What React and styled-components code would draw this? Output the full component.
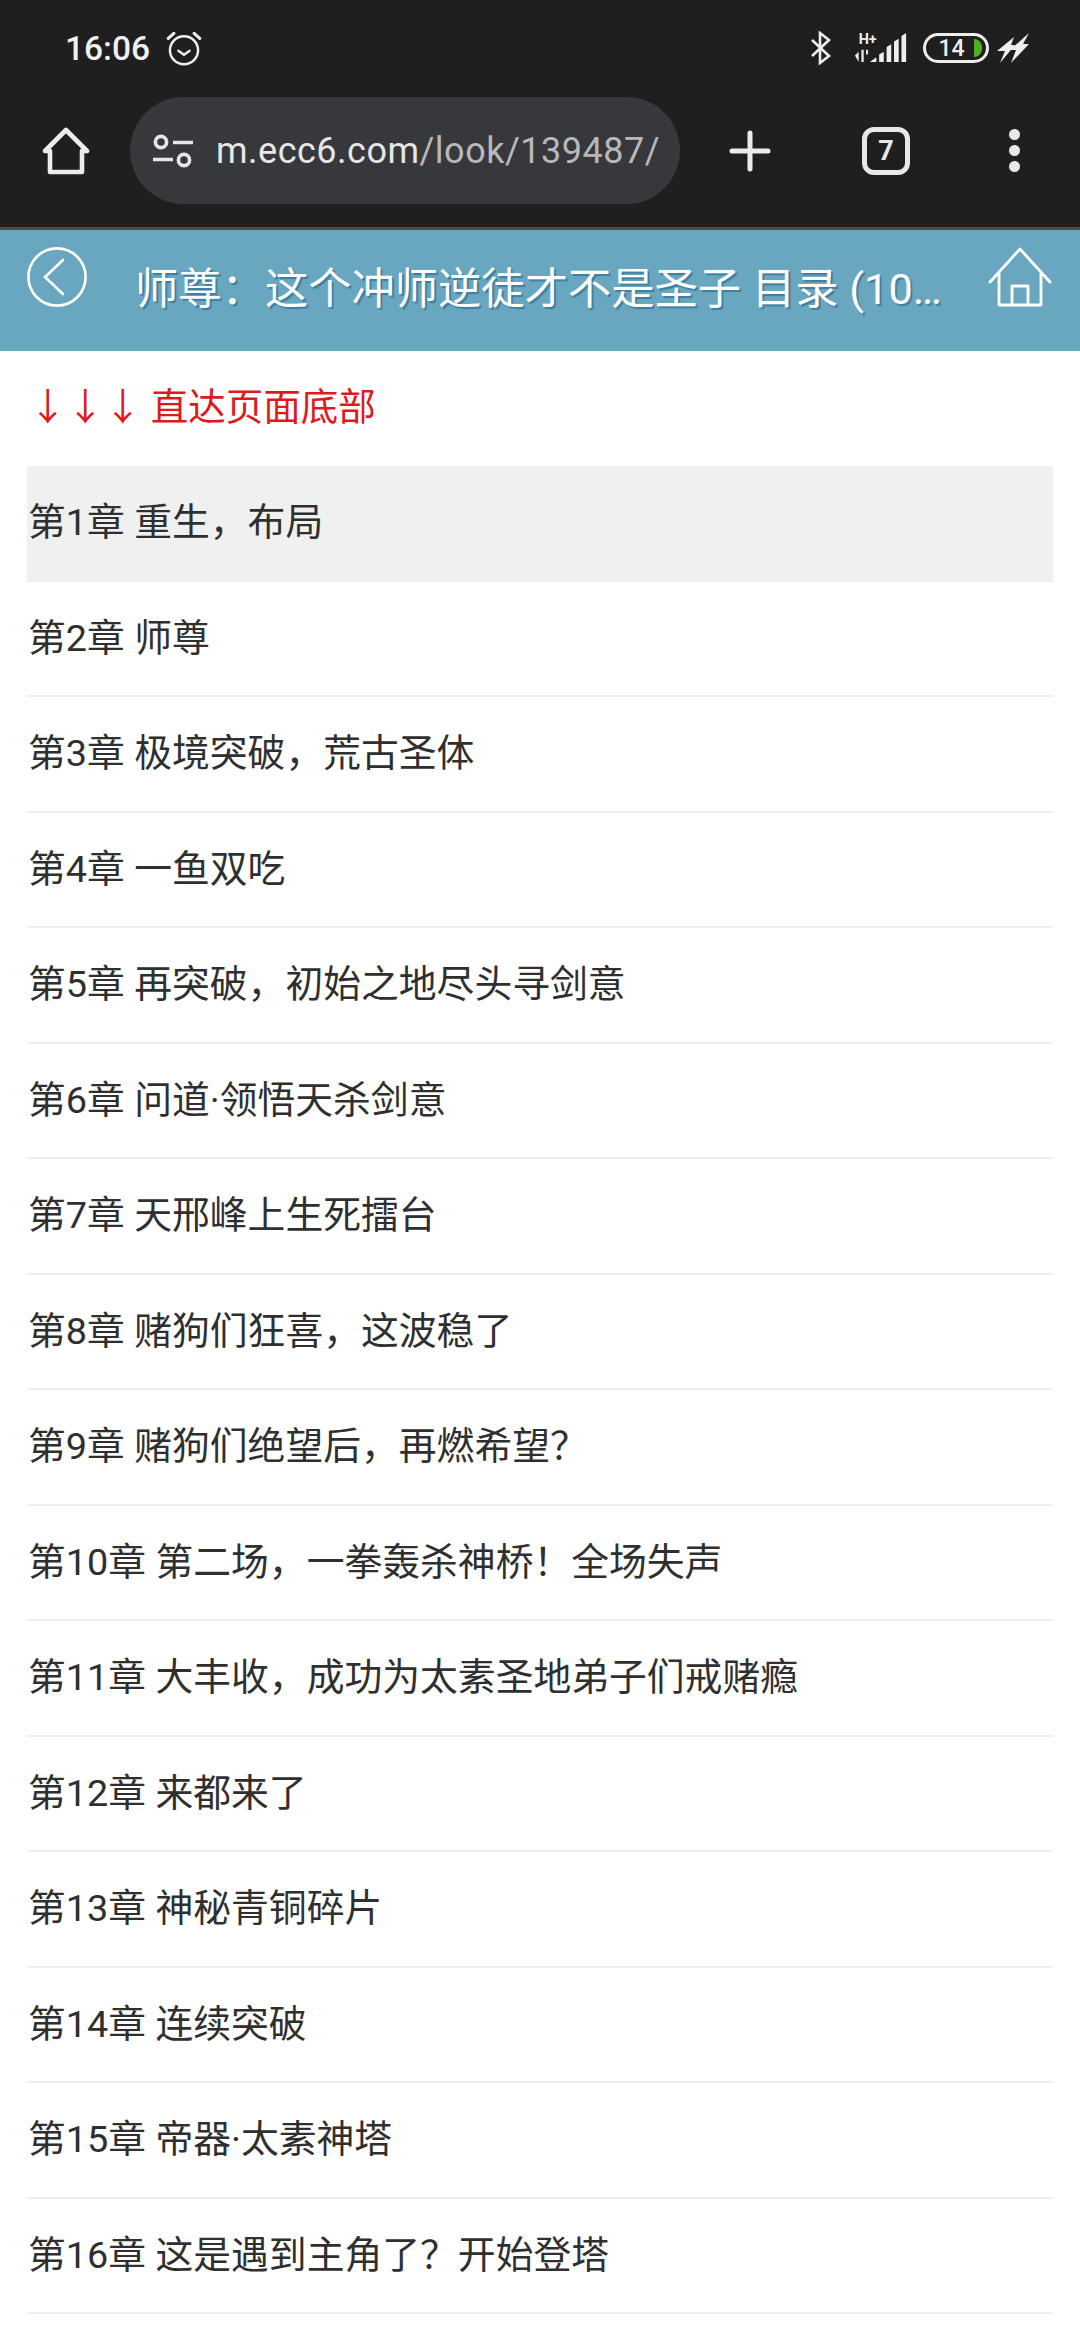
import styled, { createGlobalStyle } from 'styled-components';

const GlobalStyle = createGlobalStyle`
  * {
    box-sizing: border-box;
  }
  html,
  body {
    margin: 0;
    padding: 0;
    height: 2340px;
    overflow: hidden;
    background-color: #fff;
    font-family: Roboto, "Noto Sans CJK SC", sans-serif;
  }
`;

const CHAPTERS = [
  '第1章 重生，布局',
  '第2章 师尊',
  '第3章 极境突破，荒古圣体',
  '第4章 一鱼双吃',
  '第5章 再突破，初始之地尽头寻剑意',
  '第6章 问道·领悟天杀剑意',
  '第7章 天邢峰上生死擂台',
  '第8章 赌狗们狂喜，这波稳了',
  '第9章 赌狗们绝望后，再燃希望？',
  '第10章 第二场，一拳轰杀神桥！全场失声',
  '第11章 大丰收，成功为太素圣地弟子们戒赌瘾',
  '第12章 来都来了',
  '第13章 神秘青铜碎片',
  '第14章 连续突破',
  '第15章 帝器·太素神塔',
  '第16章 这是遇到主角了？开始登塔',
];

const Chrome = styled.div`
  background-color: #1f1f20;
  border-bottom: 3px solid #4b4c4b;
`;

const StatusBar = styled.div`
  display: flex;
  justify-content: space-between;
  align-items: center;
  height: 76px;
  padding: 20px 51px 0 65px;
`;

const StatusGroup = styled.div`
  display: flex;
  align-items: center;
  gap: ${(props) => props.$gap}px;
`;

const Clock = styled.span`
  color: #f0f0f0;
  font-size: 33.5px;
  font-weight: 500;
`;

const Battery = styled.div`
  position: relative;
  display: flex;
  align-items: center;
  justify-content: center;
  width: 66px;
  height: 30px;
  margin-left: 7px;
  padding-right: 9px;
  border: 3px solid #eee;
  border-radius: 15px;
  color: #eee;
  font-size: 23px;
  font-weight: 500;

  &::after {
    content: '';
    position: absolute;
    right: 4px;
    top: 3px;
    width: 8px;
    height: 18px;
    background-color: #4caf1e;
    border-radius: 0 9px 9px 0;
  }
`;

const SignalSvg = styled.svg`
  margin-left: 14px;
`;

const Toolbar = styled.div`
  display: flex;
  align-items: center;
  height: 151px;
  padding: 0 0 2px 42px;
`;

const AddressBar = styled.div`
  display: flex;
  align-items: center;
  gap: 22px;
  width: 550px;
  height: 107px;
  margin-left: 40px;
  padding-left: 22px;
  overflow: hidden;
  background-color: #36383c;
  border-radius: 54px;
  white-space: nowrap;
  font-size: 36px;
  letter-spacing: 0.5px;
`;

const Host = styled.span`
  color: #e6e6e6;
`;

const UrlPath = styled.span`
  color: #b9b9b9;
`;

const TabCount = styled.div`
  display: flex;
  align-items: center;
  justify-content: center;
  width: 48px;
  height: 48px;
  margin-left: 91px;
  border: 5px solid #e8e8e8;
  border-radius: 12px;
  color: #e8e8e8;
  font-size: 27px;
  font-weight: 700;
`;

const PlusIcon = styled.svg`
  margin-left: 49px;
`;

const MenuDots = styled.div`
  display: flex;
  flex-direction: column;
  gap: 5px;
  margin-left: 99px;
`;

const Dot = styled.span`
  width: 11px;
  height: 11px;
  border-radius: 50%;
  background-color: #e8e8e8;
`;

const Header = styled.div`
  display: flex;
  height: 121px;
  padding: 17px 28px 0 27px;
  background-color: #69a7c1;
`;

const Title = styled.h1`
  flex: 1;
  min-width: 0;
  margin: 19px 40px 0 48px;
  overflow: hidden;
  color: #fff;
  font-size: 43.3px;
  font-weight: 400;
  line-height: 48px;
  white-space: nowrap;
  text-overflow: ellipsis;
  text-shadow: 2px 2px 1px #3d7f9f;
`;

const BottomLink = styled.div`
  height: 115px;
  padding: 0 29px;
  color: #dd1a1e;
  font-size: 37.5px;
  line-height: 112px;
`;

const List = styled.ul`
  margin: 0 27px;
  padding: 0;
  list-style: none;
`;

const Row = styled.li`
  height: 115.5px;
  padding-left: 1px;
  color: #2f2f2f;
  font-size: 37.8px;
  line-height: 112px;
  white-space: nowrap;
  background-color: ${(props) => (props.$active ? '#f0f0f0' : 'transparent')};
  border-bottom: 2px solid #eeeeee;
`;

const AlarmIcon = () => (
  <svg width="36" height="36" viewBox="0 0 32 32" fill="none" stroke="#eee" strokeWidth="2.2" strokeLinecap="round">
    <circle cx="16" cy="18" r="12.5" />
    <path d="M11 18.5l5 3.5 5-3.5" />
    <path d="M2 7.5 7 3M30 7.5 25 3" strokeWidth="2.8" />
  </svg>
);

const BluetoothIcon = () => (
  <svg width="22" height="34" viewBox="0 0 22 34" fill="none" stroke="#eee" strokeWidth="2.6">
    <path d="M2 9l17 16-9 7V2l9 7L2 25" />
  </svg>
);

const SignalIcon = () => (
  <SignalSvg width="54" height="34" viewBox="0 0 58 34" fill="#eee">
    <text x="5" y="13" fontFamily="Roboto" fontSize="15.5" fontWeight="700">H+</text>
    <path d="M1 25l4-4v11zM8 19h2.4v13H8zM13 19h2v5h-2z" />
    <path d="M17 32l7-5v5zM27 24l5-3v11h-5zM35 16l5-3v19h-5zM43 10l5-3v25h-5zM51 4l5-3v31h-5z" />
  </SignalSvg>
);

const ChargeIcon = () => (
  <svg width="32" height="32" viewBox="0 0 32 32" fill="#eee">
    <path d="M0 19 17 5l-3 8h4L3 31l5-12zM13 18 32 1l-6 11h6L14 31l5-13z" />
  </svg>
);

const HomeIcon = () => (
  <svg width="48" height="48" viewBox="0 0 48 48" fill="none" stroke="#ececec" strokeWidth="4.6" strokeLinejoin="round" strokeLinecap="round">
    <path d="M3 24 24 3l21 21h-5v21H8V24z" />
  </svg>
);

const SiteIcon = () => (
  <svg width="42" height="36" viewBox="0 0 42 36" fill="none" stroke="#e6e6e6" strokeWidth="3.6">
    <circle cx="9" cy="9" r="5.6" />
    <circle cx="32" cy="27" r="5.6" />
    <path d="M21 9.5h20M1 26.5h20" />
  </svg>
);

const BackIcon = () => (
  <svg width="60" height="60" viewBox="0 0 60 60" fill="none" stroke="#fff" strokeWidth="2.6">
    <circle cx="30" cy="30" r="28.6" />
    <path d="M36 13 18 30l18 17" strokeLinecap="round" />
  </svg>
);

const SiteHomeIcon = () => (
  <svg width="64" height="60" viewBox="0 0 64 60" fill="none" stroke="#fff" strokeWidth="2.8" strokeLinecap="round" strokeLinejoin="round">
    <path d="M2 35 32 2l30 33" />
    <path d="M11 26v32h42V26" />
    <path d="M24 58V39h16v19" />
  </svg>
);

const App = () => {
  return (
    <>
      <GlobalStyle />
      <Chrome>
        <StatusBar>
          <StatusGroup $gap={16}>
            <Clock>16:06</Clock>
            <AlarmIcon />
          </StatusGroup>
          <StatusGroup $gap={8}>
            <BluetoothIcon />
            <SignalIcon />
            <Battery>14</Battery>
            <ChargeIcon />
          </StatusGroup>
        </StatusBar>
        <Toolbar>
          <HomeIcon />
          <AddressBar>
            <SiteIcon />
            <span>
              <Host>m.ecc6.com</Host>
              <UrlPath>/look/139487/</UrlPath>
            </span>
          </AddressBar>
          <PlusIcon width="42" height="42" viewBox="0 0 42 42" fill="none" stroke="#ececec" strokeWidth="5" strokeLinecap="round">
            <path d="M21 3v36M3 21h36" />
          </PlusIcon>
          <TabCount>7</TabCount>
          <MenuDots>
            <Dot />
            <Dot />
            <Dot />
          </MenuDots>
        </Toolbar>
      </Chrome>
      <Header>
        <BackIcon />
        <Title>师尊：这个冲师逆徒才不是圣子 目录 (1036章)</Title>
        <SiteHomeIcon />
      </Header>
      <BottomLink>↓↓↓ 直达页面底部</BottomLink>
      <List>
        {CHAPTERS.map((name, index) => (
          <Row key={name} $active={index === 0}>
            {name}
          </Row>
        ))}
      </List>
    </>
  );
};

export default App;
